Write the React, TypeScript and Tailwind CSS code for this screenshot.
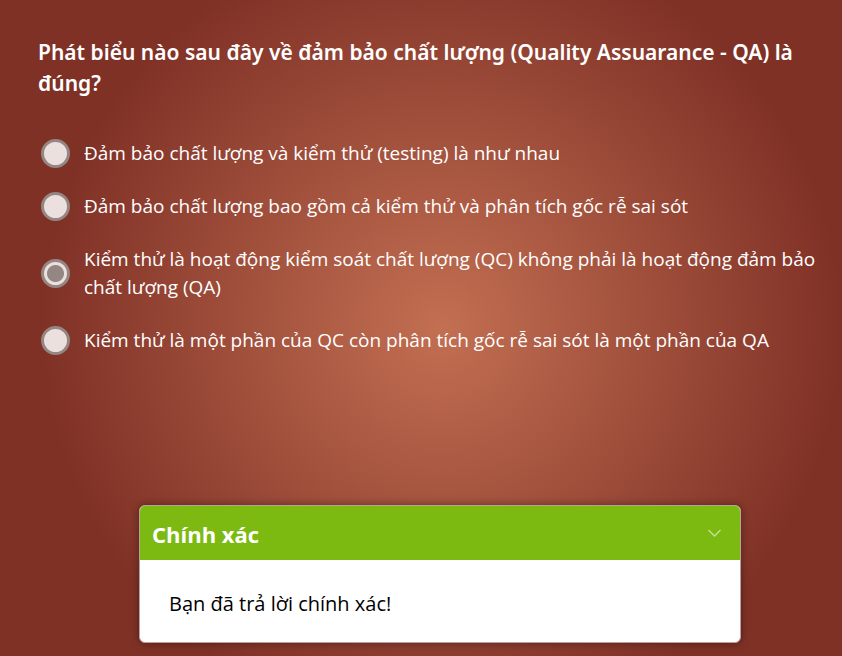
import { useState } from "react";

const answers = [
  "Đảm bảo chất lượng và kiểm thử (testing) là như nhau",
  "Đảm bảo chất lượng bao gồm cả kiểm thử và phân tích gốc rễ sai sót",
  "Kiểm thử là hoạt động kiểm soát chất lượng (QC) không phải là hoạt động đảm bảo chất lượng (QA)",
  "Kiểm thử là một phần của QC còn phân tích gốc rễ sai sót là một phần của QA",
];

function Answer({ id, text, checked, onSelect }: { id: string; text: string; checked: boolean; onSelect: () => void }) {
  return (
    <div className="flex items-center gap-[14px]">
      <input
        id={id}
        type="radio"
        name="answer"
        checked={checked}
        onChange={onSelect}
        className="-my-px size-[29px] shrink-0 appearance-none rounded-full border-3 border-[#948683] bg-[#ece0de] checked:bg-[radial-gradient(circle,#948683_8px,#ece0de_9px)]"
      />
      <label htmlFor={id} className="text-[19px] leading-[28px]">
        {text}
      </label>
    </div>
  );
}

function Feedback() {
  const [open, setOpen] = useState(true);
  return (
    <section className="mx-auto w-full max-w-[602px] overflow-hidden rounded-md border border-[#b9a29c] bg-white shadow-[0_0_8px_rgba(0,0,0,0.4)]">
      <header className="flex h-[54px] items-center justify-between bg-[#7cba12] pr-[18px] pl-3">
        <h2 className="pt-[2px] text-[22px] font-bold text-white">Chính xác</h2>
        <button type="button" aria-label="Thu gọn" aria-expanded={open} onClick={() => setOpen(!open)}>
          <svg className="h-4 w-4" viewBox="0 0 16 16" fill="none" stroke="#c5e096" strokeWidth="1.3">
            <path d="M2.5 5 L8.5 11 L14.5 5" />
          </svg>
        </button>
      </header>
      {open && <p className="px-[29px] pt-[30px] pb-6 text-[20px] leading-[28px] text-black">Bạn đã trả lời chính xác!</p>}
    </section>
  );
}

export default function App() {
  const [selected, setSelected] = useState(2);
  return (
    <main className="flex min-h-screen flex-col justify-between bg-[radial-gradient(circle_400px_at_442px_328px,#c26f52,#803126)] pt-[37px] pb-[13px] font-['Open_Sans',sans-serif] text-white">
      <form className="pr-4 pl-[38px]">
        <fieldset>
          <legend className="font-['Noto_Sans',sans-serif] text-[21px] leading-[31px] font-semibold">
            Phát biểu nào sau đây về đảm bảo chất lượng (Quality Assuarance - QA) là đúng?
          </legend>
          <div className="mt-10 flex flex-col gap-[25px] pl-[3px]">
            {answers.map((text, i) => (
              <Answer key={text} id={`answer-${i}`} text={text} checked={selected === i} onSelect={() => setSelected(i)} />
            ))}
          </div>
        </fieldset>
      </form>
      <div className="pr-[101px] pl-[139px]">
        <Feedback />
      </div>
    </main>
  );
}
